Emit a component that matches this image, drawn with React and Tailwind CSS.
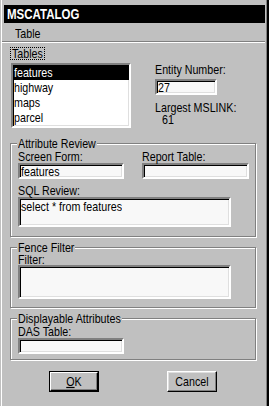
function T({ children, className = "" }) {
  return <span className={`inline-block scale-y-[1.2] ${className}`}>{children}</span>;
}

export default function App() {
  const field =
    "border-2 border-t-[#808080] border-l-[#808080] border-b-white border-r-white shadow-[inset_1px_1px_0_#000,inset_-1px_-1px_0_#dfdfdf] bg-[#f8f8f8]";
  const group =
    "border border-[#808080] shadow-[inset_1px_1px_0_#fff,1px_1px_0_#fff] ml-[8px] w-[246px] flex flex-col";
  const legend = "block w-fit -mt-[8px] ml-[6px] px-px bg-[#c0c0c0] leading-[14px]";
  const rows = ["features", "highway", "maps", "parcel"];
  return (
    <div className="w-[269px] h-[406px] bg-[#c0c0c0] pl-px border-r-2 border-black font-['Liberation_Sans',Arial,sans-serif] text-[10.7px] text-black overflow-hidden">
      <div className="h-full border-l border-white border-r border-r-[#808080] flex flex-col">
        <div className="mt-[5px] ml-[2px] mr-px h-[18px] bg-black text-white font-bold text-[11.5px] leading-[18px] pl-[3px]">
          <T className="scale-y-[1.22]">MSCATALOG</T>
        </div>
        <div className="h-[18px] pl-[13px] pt-[4px] leading-[13px]">
          <T>Table</T>
        </div>
        <div className="mr-px border-t border-t-[#808080] border-b border-b-white" />
        <div className="flex">
          <div className="flex flex-col">
            <div className="mt-[4px] ml-[8px] w-fit border border-dotted border-black px-px leading-[11px]">
              <T>Tables</T>
            </div>
            <div className={`mt-[3px] ml-[9px] w-[120px] h-[65px] ${field} bg-white`}>
              {rows.map((r, i) => (
                <div
                  key={r}
                  className={`h-[15px] leading-[15px] pl-px ${i === 0 ? "bg-black text-white" : ""}`}
                >
                  <T>{r}</T>
                </div>
              ))}
            </div>
          </div>
          <div className="ml-[24px] pt-[20px] flex flex-col">
            <div className="leading-[13px]">
              <T>Entity Number:</T>
            </div>
            <div className={`mt-[3px] w-[62px] h-[16px] ${field} leading-[12px] pl-px`}>
              <T>27</T>
            </div>
            <div className="mt-[6px] leading-[12px]">
              <T>Largest MSLINK:</T>
            </div>
            <div className="leading-[13px] pl-[7px]">
              <T>61</T>
            </div>
          </div>
        </div>

        <div className={`mt-[15px] ${group} pb-[9px]`}>
          <span className={legend}>
            <T>Attribute Review</T>
          </span>
          <div className="px-[7px] grid grid-cols-[106px_107px] gap-x-[18px]">
            <div className="leading-[13px]">
              <T>Screen Form:</T>
            </div>
            <div className="leading-[13px]">
              <T>Report Table:</T>
            </div>
            <div className={`h-[16px] ${field} leading-[12px] pl-px`}>
              <T>features</T>
            </div>
            <div className={`h-[16px] ${field}`} />
          </div>
          <div className="px-[7px] mt-[5px] leading-[13px]">
            <T>SQL Review:</T>
          </div>
          <div className={`ml-[7px] w-[213px] h-[30px] ${field} leading-[13px] pl-px pt-[1px]`}>
            <T>select * from features</T>
          </div>
        </div>

        <div className={`mt-[10px] ${group} pb-[8px]`}>
          <span className={legend}>
            <T>Fence Filter</T>
          </span>
          <div className="px-[7px] leading-[11px]">
            <T>Filter:</T>
          </div>
          <div className={`ml-[7px] w-[213px] h-[34px] ${field}`} />
        </div>

        <div className={`mt-[10px] ${group} pb-[5px]`}>
          <span className={legend}>
            <T>Displayable Attributes</T>
          </span>
          <div className="px-[7px] leading-[13px]">
            <T>DAS Table:</T>
          </div>
          <div className={`ml-[7px] w-[106px] h-[16px] ${field}`} />
        </div>

        <div className="mt-[11px] flex pl-[47px] gap-[68px]">
          <div className="w-[50px] h-[21px] border border-black">
            <div className="h-full border border-t-white border-l-white border-b-black border-r-black shadow-[inset_-1px_-1px_0_#808080] text-center leading-[17px]">
              <T>
                <span className="underline underline-offset-1">O</span>K
              </T>
            </div>
          </div>
          <div className="w-[50px] h-[21px] border border-t-white border-l-white border-b-black border-r-black shadow-[inset_-1px_-1px_0_#808080,inset_1px_1px_0_#dfdfdf] text-center leading-[19px]">
            <T>Cancel</T>
          </div>
        </div>
      </div>
    </div>
  );
}
